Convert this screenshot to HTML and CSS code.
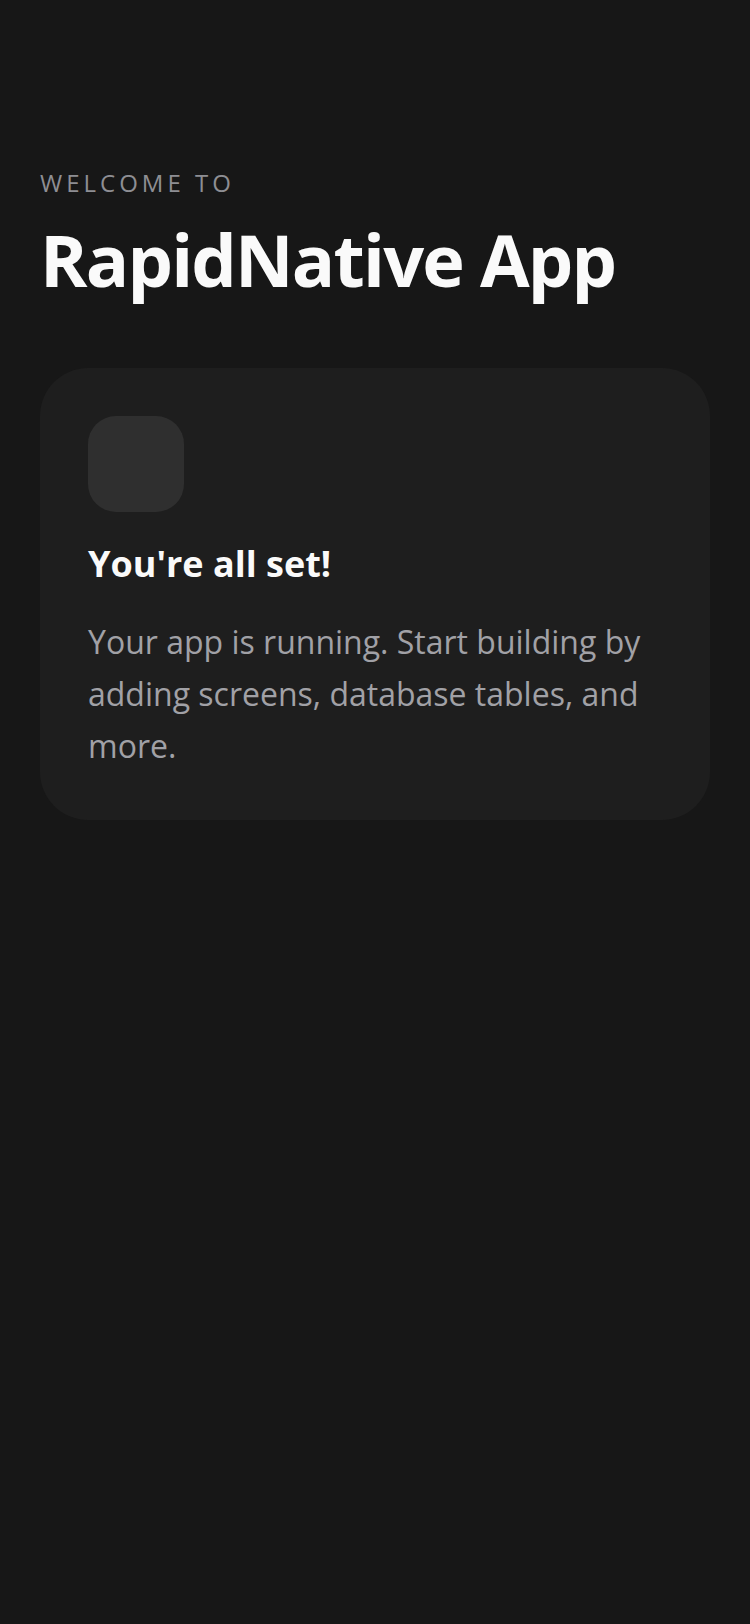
FILE: index.html
```html
<!DOCTYPE html>
<html lang="en">
<head>
<meta charset="utf-8">
<title>RapidNative App</title>
<link rel="stylesheet" href="styles.css">
</head>
<body>
<main class="screen">
  <header class="hero">
    <p class="eyebrow">WELCOME TO</p>
    <h1 class="app-title">RapidNative App</h1>
  </header>
  <section class="card">
    <div class="card-icon"></div>
    <h2 class="card-title">You're all set!</h2>
    <p class="card-text">Your app is running. Start building by adding screens, database tables, and more.</p>
  </section>
</main>
</body>
</html>
```
FILE: styles.css
```css
html, body {
  margin: 0;
  padding: 0;
  background: #171717;
}
body {
  font-family: "Open Sans", "Noto Sans", sans-serif;
  min-height: 1624px;
}
.screen {
  padding: 167px 40px 40px 40px;
}
.hero {
  display: flex;
  flex-direction: column;
}
.eyebrow {
  margin: 0;
  font-size: 24px;
  line-height: 32px;
  letter-spacing: 4px;
  color: #8e8e93;
  font-weight: 400;
}
.app-title {
  margin: 20px 0 0 0;
  font-size: 72px;
  line-height: 80px;
  font-weight: 700;
  letter-spacing: -1.8px;
  color: #fafafa;
}
.card {
  margin-top: 69px;
  background: #1e1e1e;
  border-radius: 48px;
  padding: 48px;
  display: flex;
  flex-direction: column;
}
.card-icon {
  width: 96px;
  height: 96px;
  border-radius: 28px;
  background: #2f2f2f;
}
.card-title {
  margin: 28px 0 0 0;
  font-size: 36px;
  line-height: 48px;
  font-weight: 700;
  color: #fafafa;
}
.card-text {
  margin: 28px 0 0 0;
  font-size: 32px;
  line-height: 52px;
  color: #a1a1a6;
}
```
